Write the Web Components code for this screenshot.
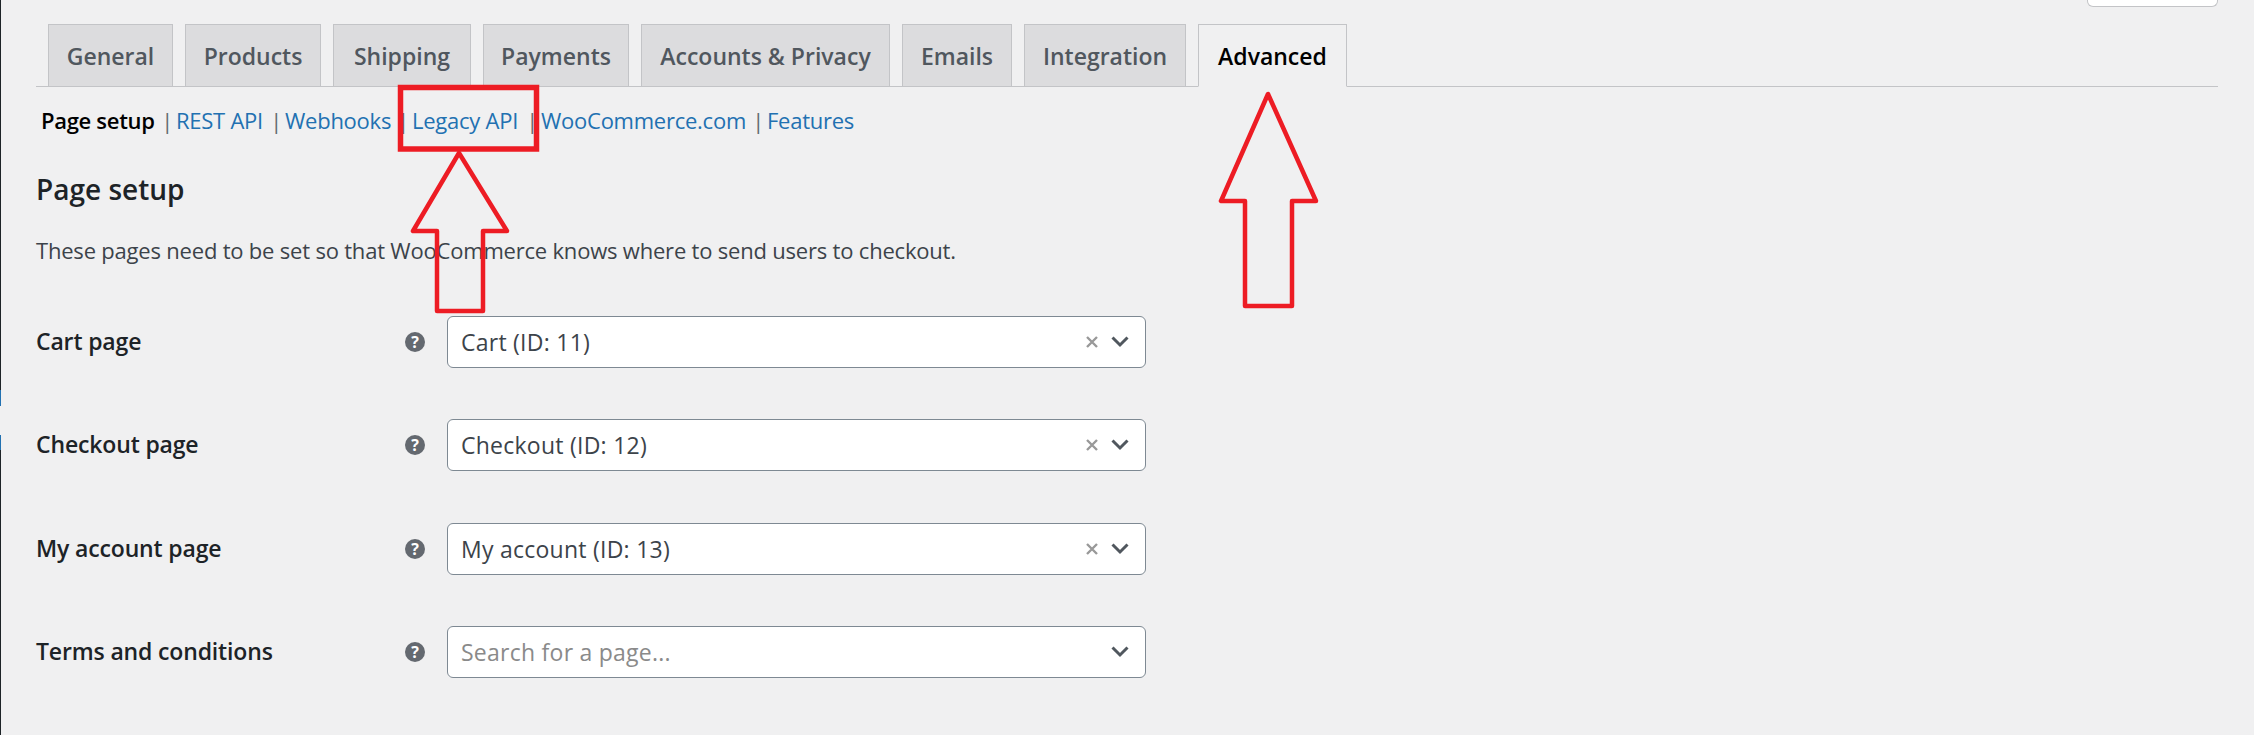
<!DOCTYPE html>
<html>
<head>
<meta charset="utf-8">
<style>
  html, body { margin: 0; padding: 0; height: 100%; overflow: hidden; }
  body {
    background: #f0f0f1;
    font-family: "Open Sans", "Noto Sans", sans-serif;
    color: #1d2327;
  }
</style>
</head>
<body>
<settings-page>
  <settings-tabs>
    <settings-tab w="125">General</settings-tab>
    <settings-tab w="136">Products</settings-tab>
    <settings-tab w="138">Shipping</settings-tab>
    <settings-tab w="146">Payments</settings-tab>
    <settings-tab w="249">Accounts &amp; Privacy</settings-tab>
    <settings-tab w="110">Emails</settings-tab>
    <settings-tab w="162">Integration</settings-tab>
    <settings-tab w="149" active>Advanced</settings-tab>
  </settings-tabs>
  <sub-nav>
    <sub-link current w="135">Page setup</sub-link>
    <sub-link w="109">REST API</sub-link>
    <sub-link w="127">Webhooks</sub-link>
    <sub-link w="129">Legacy API</sub-link>
    <sub-link w="226">WooCommerce.com</sub-link>
    <sub-link last>Features</sub-link>
  </sub-nav>
  <section-head title="Page setup">These pages need to be set so that WooCommerce knows where to send users to checkout.</section-head>
  <page-row label="Cart page" value="Cart (ID: 11)"></page-row>
  <page-row label="Checkout page" value="Checkout (ID: 12)"></page-row>
  <page-row label="My account page" value="My account (ID: 13)"></page-row>
  <page-row label="Terms and conditions" placeholder="Search for a page..."></page-row>
</settings-page>

<script>
class SettingsPage extends HTMLElement {
  constructor() {
    super()
    this.attachShadow({ mode: "open" }).innerHTML = `
      <style>
        :host { display: block; position: relative; height: 735px; overflow: hidden; }
        .edge {
          position: absolute; left: 0; top: 0; bottom: 0; width: 1px;
          display: flex; flex-direction: column;
        }
        .edge i { display: block; background: #1d2327; flex: 1; }
        .edge .blue { background: #2271b1; flex: 0 0 16px; }
        .edge .gap { background: #f0f0f1; flex: 0 0 29px; }
        .edge .first { flex: 0 0 390px; }
        .content { padding: 0 36px; width: 2182px; }
        .top-action { display: flex; justify-content: flex-end; height: 24px; }
        .top-action div {
          width: 131px; height: 7px; box-sizing: border-box;
          background: #fff; border: 1px solid #c3c4c7; border-top: 0;
          border-radius: 0 0 6px 6px;
        }
        svg { position: absolute; left: 0; top: 0; pointer-events: none; }
      </style>
      <div class="edge">
        <i class="first"></i><i class="blue"></i><i class="gap"></i><i class="blue" style="flex-basis:15px"></i><i></i>
      </div>
      <div class="content">
        <div class="top-action"><div></div></div>
        <slot></slot>
      </div>
      <svg width="2254" height="735" fill="none" stroke="#ed1c24" stroke-linejoin="round">
        <rect x="400.5" y="87.5" width="136" height="61.5" stroke-width="5.5" stroke-linejoin="miter"/>
        <path stroke-width="4.5" d="M459 153 L413 231 H437 V311 H483 V231 H507 Z"/>
        <path stroke-width="4.5" d="M1268 94 L1221 201 H1245 V306 H1292 V201 H1316 Z"/>
      </svg>`
  }
}

class SettingsTabs extends HTMLElement {
  constructor() {
    super()
    this.attachShadow({ mode: "open" }).innerHTML = `
      <style>
        :host {
          display: flex; gap: 12px; height: 63px; box-sizing: border-box;
          padding-left: 12px; border-bottom: 1px solid #c3c4c7;
        }
      </style>
      <slot></slot>`
  }
}

class SettingsTab extends HTMLElement {
  constructor() {
    super()
    this.attachShadow({ mode: "open" }).innerHTML = `
      <style>
        :host {
          display: flex; align-items: center; justify-content: center;
          box-sizing: border-box; height: 63px;
          background: #dcdcde; border: 1px solid #c3c4c7;
          font-size: 23px; font-weight: 600; color: #50575e; white-space: nowrap;
        }
        :host([active]) { background: #f0f0f1; color: #000; border-bottom-color: #f0f0f1; }
      </style>
      <slot></slot>`
    this.style.width = this.getAttribute("w") + "px"
  }
}

class SubNav extends HTMLElement {
  constructor() {
    super()
    this.attachShadow({ mode: "open" }).innerHTML = `
      <style>
        :host { display: flex; height: 68px; padding: 16px 0 0 5px; box-sizing: border-box; font-size: 22px; }
      </style>
      <slot></slot>`
  }
}

class SubLink extends HTMLElement {
  constructor() {
    super()
    const sep = this.hasAttribute("last") ? "" : `<span class="sep">|</span>`
    this.attachShadow({ mode: "open" }).innerHTML = `
      <style>
        :host {
          display: flex; justify-content: space-between; box-sizing: border-box; padding-right: 3px;
          white-space: nowrap; color: #2271b1; line-height: 34px; letter-spacing: -0.25px;
        }
        :host([current]) { color: #000; font-weight: 600; letter-spacing: -0.3px; }
        .sep { color: #646970; font-weight: 400; }
      </style>
      <span><slot></slot></span>${sep}`
    if (this.hasAttribute("w")) this.style.width = this.getAttribute("w") + "px"
  }
}

class SectionHead extends HTMLElement {
  constructor() {
    super()
    this.attachShadow({ mode: "open" }).innerHTML = `
      <style>
        :host { display: block; height: 161px; padding-top: 15px; box-sizing: border-box; }
        h2 { margin: 0; height: 38px; line-height: 38px; font-size: 28px; font-weight: 600; color: #1d2327; }
        p { margin: 22px 0 0; line-height: 40px; font-size: 22px; color: #3c434a; letter-spacing: -0.2px; }
      </style>
      <h2>${this.getAttribute("title")}</h2>
      <p><slot></slot></p>`
  }
}

class PageRow extends HTMLElement {
  constructor() {
    super()
    const value = this.getAttribute("value")
    const text = value
      ? `<span class="val">${value}</span>`
      : `<span class="val ph">${this.getAttribute("placeholder")}</span>`
    const clear = value
      ? `<svg class="x" width="12" height="12" viewBox="0 0 12 12"><path d="M1 1 L11 11 M11 1 L1 11" stroke="#999" stroke-width="2.4"/></svg>`
      : ""
    this.attachShadow({ mode: "open" }).innerHTML = `
      <style>
        :host {
          display: grid; grid-template-columns: 369px 42px 699px; align-items: center;
          height: 52px; margin-bottom: 51.3px; font-size: 23px;
        }
        label { font-weight: 600; color: #1d2327; letter-spacing: -0.15px; position: relative; top: -1px; }
        .help {
          width: 20px; height: 20px; border-radius: 50%; background: #646970; color: #fff;
          font: 700 16px/20px "Open Sans", sans-serif; text-align: center;
        }
        .box {
          height: 52px; box-sizing: border-box; background: #fff;
          border: 1px solid #7e8993; border-radius: 6px;
          display: flex; align-items: center; padding: 0 16px 0 13px;
        }
        .val { flex: 1; color: #3c434a; white-space: nowrap; letter-spacing: 0.25px; }
        .ph { color: #8a8a8a; }
        .x { margin-right: 13px; }
      </style>
      <label>${this.getAttribute("label")}</label>
      <div class="help">?</div>
      <div class="box">
        ${text}${clear}
        <svg width="18" height="12" viewBox="0 0 18 12"><path d="M1.5 1.5 L9 9 L16.5 1.5" fill="none" stroke="#50575e" stroke-width="3"/></svg>
      </div>`
  }
}

customElements.define("settings-page", SettingsPage)
customElements.define("settings-tabs", SettingsTabs)
customElements.define("settings-tab", SettingsTab)
customElements.define("sub-nav", SubNav)
customElements.define("sub-link", SubLink)
customElements.define("section-head", SectionHead)
customElements.define("page-row", PageRow)
</script>
</body>
</html>
